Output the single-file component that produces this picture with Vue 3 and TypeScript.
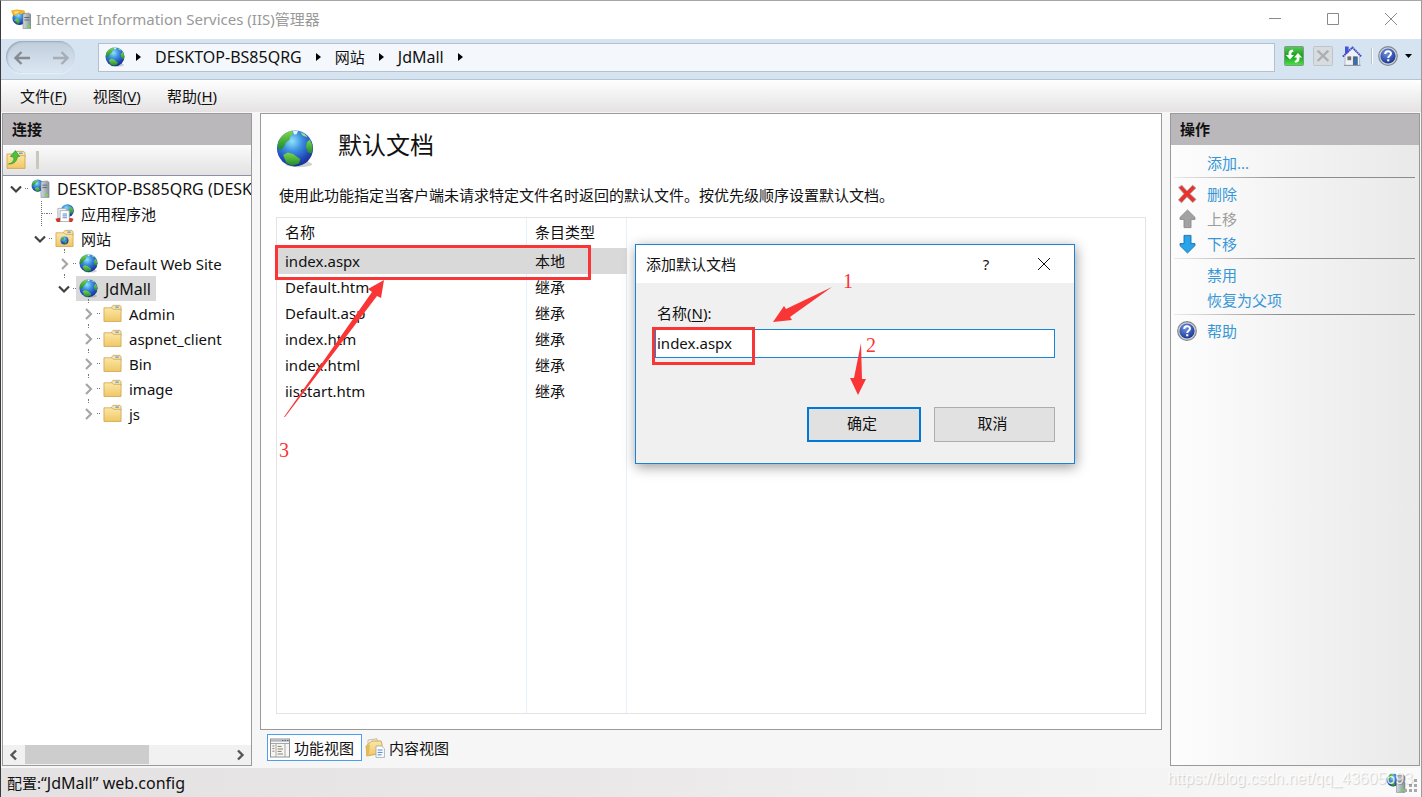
<script setup lang="ts">
import { ref } from 'vue'

interface TreeNode {
  label: string
  level: number
  icon: string
  state: 'open' | 'closed' | 'leaf'
  caps?: boolean
  stub?: boolean
  selected?: boolean
}

interface ActionItem {
  label: string
  icon?: string
  disabled?: boolean
}

const menus = [
  { text: '文件', key: 'F' },
  { text: '视图', key: 'V' },
  { text: '帮助', key: 'H' },
]

const crumbs = ['DESKTOP-BS85QRG', '网站', 'JdMall']

const nodes: TreeNode[] = [
  { label: 'DESKTOP-BS85QRG (DESK', level: 0, icon: 'server', state: 'open', caps: true },
  { label: '应用程序池', level: 1, icon: 'pool', state: 'leaf' },
  { label: '网站', level: 1, icon: 'sites', state: 'open' },
  { label: 'Default Web Site', level: 2, icon: 'globe', state: 'closed', stub: true },
  { label: 'JdMall', level: 2, icon: 'globe', state: 'open', caps: true, stub: true, selected: true },
  { label: 'Admin', level: 3, icon: 'folder', state: 'closed', stub: true },
  { label: 'aspnet_client', level: 3, icon: 'folder', state: 'closed', stub: true },
  { label: 'Bin', level: 3, icon: 'folder', state: 'closed', stub: true },
  { label: 'image', level: 3, icon: 'folder', state: 'closed', stub: true },
  { label: 'js', level: 3, icon: 'folder', state: 'closed', stub: true },
]

const documents = [
  { name: 'index.aspx', type: '本地' },
  { name: 'Default.htm', type: '继承' },
  { name: 'Default.asp', type: '继承' },
  { name: 'index.htm', type: '继承' },
  { name: 'index.html', type: '继承' },
  { name: 'iisstart.htm', type: '继承' },
]

const actionGroups: ActionItem[][] = [
  [{ label: '添加...' }],
  [
    { label: '删除', icon: 'delete' },
    { label: '上移', icon: 'up', disabled: true },
    { label: '下移', icon: 'down' },
  ],
  [{ label: '禁用' }, { label: '恢复为父项' }],
  [{ label: '帮助', icon: 'help' }],
]

const selectedDoc = ref(0)
const docName = ref('index.aspx')
</script>

<template>
  <div class="window">
    <svg class="sprite" aria-hidden="true">
      <defs>
        <radialGradient id="ocean" cx="0.42" cy="0.3" r="0.7">
          <stop offset="0" stop-color="#8fe4fb" />
          <stop offset="0.4" stop-color="#3c8fe0" />
          <stop offset="0.8" stop-color="#2148b8" />
          <stop offset="1" stop-color="#1a3390" />
        </radialGradient>
        <linearGradient id="land" x1="0" y1="0" x2="0" y2="1">
          <stop offset="0" stop-color="#7fd64a" />
          <stop offset="1" stop-color="#1d8a2e" />
        </linearGradient>
        <linearGradient id="paper" x1="0" y1="0" x2="0" y2="1">
          <stop offset="0" stop-color="#fbe7a6" />
          <stop offset="1" stop-color="#f0c765" />
        </linearGradient>
        <linearGradient id="steel" x1="0" y1="0" x2="1" y2="0">
          <stop offset="0" stop-color="#d5dadd" />
          <stop offset="1" stop-color="#84919a" />
        </linearGradient>
        <radialGradient id="helpfill" cx="0.4" cy="0.3" r="0.75">
          <stop offset="0" stop-color="#6f94e6" />
          <stop offset="1" stop-color="#16318f" />
        </radialGradient>
        <linearGradient id="green" x1="0" y1="0" x2="0" y2="1">
          <stop offset="0" stop-color="#5cc95c" />
          <stop offset="0.5" stop-color="#10a21a" />
          <stop offset="1" stop-color="#4fe24a" />
        </linearGradient>
      </defs>
      <symbol id="globe" viewBox="0 0 20 20">
        <ellipse cx="12" cy="18" rx="7" ry="1.6" fill="#000" opacity="0.18" />
        <circle cx="10" cy="9.7" r="9.5" fill="url(#ocean)" />
        <path d="M1.2 6C2.8 3 5.4 1 8.4 .4L9 2 7.6 3.2 7.2 5 5 6.8 4.4 8.6 2.8 10.2 .8 9.6z" fill="url(#land)" />
        <path d="M3.8 13.2L6.2 11.8 9 12.6 12.8 15.4 12 17.6 8.6 18.8 5.4 17.2z" fill="url(#land)" />
        <path d="M16.2 6.6L17.8 5C19.4 8 19.6 10 18.6 12.4L16.8 11.8 15.8 9z" fill="url(#land)" />
        <path d="M8.8 .5L11.6 .5 10.8 2.2 9.6 2.4z" fill="#e4f6ea" />
        <path d="M12.8 1.2L15 2 16.6 3.8 14.2 3z" fill="#9fe07a" />
      </symbol>
      <symbol id="server" viewBox="0 0 20 20">
        <circle cx="7" cy="7" r="6.4" fill="url(#ocean)" />
        <path d="M1.6 4.4L5 1 7.4 1.6 5.6 4 3.4 6.4 1 7.6z" fill="url(#land)" />
        <path d="M4 9.6L7.4 8.8 9.4 11 8 13.2 5 12.6z" fill="url(#land)" />
        <path d="M10.5 3L17 2 19 3.4V19.4H10.5z" fill="url(#steel)" stroke="#7b868d" stroke-width="0.6" />
        <path d="M12 6.5h5M12 9h5" stroke="#5c6870" stroke-width="1" />
        <rect x="15" y="16" width="3" height="2" fill="#6be03a" />
      </symbol>
      <symbol id="appicon" viewBox="0 0 20 20">
        <circle cx="8.4" cy="9" r="7" fill="url(#ocean)" />
        <path d="M3 11L6 9.6 9 12 7.4 15.4z" fill="url(#land)" />
        <path d="M0 1.5L5.5 .5 13 1.2 14.6 3.6 11 5 7 4.6 5 7 1.8 6z" fill="#f3b32d" />
        <path d="M3 2.4L8 2.2 7 4 4 5z" fill="#ffe28a" />
        <path d="M12 5L17.4 4 20 5.4V19.6H12z" fill="url(#steel)" stroke="#7b868d" stroke-width="0.6" />
        <path d="M13.4 8.5h5M13.4 11h5" stroke="#5c6870" />
        <rect x="16" y="16.2" width="3" height="2" fill="#6be03a" />
      </symbol>
      <symbol id="pool" viewBox="0 0 20 20">
        <circle cx="13" cy="7" r="6.8" fill="url(#ocean)" />
        <path d="M15 2.2L18.6 4.4 19.4 9 16.4 10.4 15 6z" fill="url(#land)" />
        <path d="M3 4.6H12V16H3z" fill="#eef0f1" stroke="#9ba2a6" stroke-width="0.8" />
        <path d="M5.4 7H15V18.4H5.4z" fill="#fff" stroke="#9ba2a6" stroke-width="0.8" />
        <path d="M8 10.5h4.6M8 12.5h4.6M8 14.5h4.6" stroke="#4a86c8" />
        <path d="M.4 15.4L5.4 14.4V19H2z" fill="#c9392c" />
        <path d="M19.6 15.4L15 14.4V19H18z" fill="#c9392c" />
      </symbol>
      <symbol id="folder" viewBox="0 0 20 20">
        <path d="M9 3.4L10.6 1.4H17.8L19 3V7H9z" fill="#f7e5b1" stroke="#c9a04c" stroke-width="0.8" />
        <rect x="13" y="2.6" width="3.6" height="1.4" fill="#5aa0dc" />
        <path d="M1 4H9.4L11 5.6H19V18.4H1z" fill="url(#paper)" stroke="#cda14a" stroke-width="0.8" />
      </symbol>
      <symbol id="sites" viewBox="0 0 20 20">
        <use href="#folder" width="20" height="20" />
        <circle cx="10" cy="12" r="4.2" fill="url(#ocean)" />
        <path d="M7 10.4L9.4 8.8 10 11 8 12.8zM10 13L12.6 12.6 12 15 10.4 15.4z" fill="#3fb53b" />
      </symbol>
      <symbol id="connect" viewBox="0 0 20 20">
        <use href="#folder" width="20" height="20" />
        <path d="M2.4 14C6 13.4 8 11 8 7.4L4.4 6.4 9.4 .6 13.6 6.4 11.2 7C11.2 11.4 7.4 14.4 2.4 14z" fill="#4cc13b" stroke="#2b8e26" stroke-width="0.6" />
      </symbol>
      <symbol id="refresh" viewBox="0 0 20 20">
        <rect x="0.5" y="0.5" width="19" height="19" rx="1" fill="url(#green)" stroke="#7f9a86" />
        <path d="M8.6 3.6C5.4 4 4.2 6 4.6 9H1.8L6 13.4 10 9H7.4C7 7 7.6 6 9.6 5.4z" fill="#fff" />
        <path d="M11.4 16.8C14.6 16.4 15.8 14.4 15.4 11.4H18.2L14 7 10 11.4H12.6C13 13.4 12.4 14.4 10.4 15z" fill="#fff" />
      </symbol>
      <symbol id="stop" viewBox="0 0 20 20">
        <rect x="0.5" y="0.5" width="19" height="19" rx="1" fill="#d9dcdf" stroke="#bfc4c9" />
        <path d="M4.6 4.6L15.4 15M15.4 4.6L4.6 15" stroke="#a9afb5" stroke-width="2.4" />
      </symbol>
      <symbol id="home" viewBox="0 0 20 20">
        <rect x="3" y="0.5" width="3.6" height="7" fill="#4553d4" />
        <path d="M3 9.4L10.4 2.4 17.6 9.4V19.4H3z" fill="#f0f1f4" stroke="#a3a9b4" stroke-width="0.7" />
        <path d="M.8 10.6L10.4 1.4 19.4 10.6" fill="none" stroke="#3a48cc" stroke-width="1.8" stroke-dasharray="1.6 0.6" />
        <rect x="5.4" y="10.4" width="3.8" height="3.8" fill="#6b6f76" />
        <rect x="11.2" y="10.8" width="4.2" height="8.4" fill="#2f6fc0" stroke="#69471e" stroke-width="0.5" />
        <path d="M2 19.4H18.6" stroke="#8f959c" />
      </symbol>
      <symbol id="help" viewBox="0 0 20 20">
        <circle cx="10" cy="10" r="9.3" fill="#d0d3d7" stroke="#83888e" stroke-width="1.2" />
        <circle cx="10" cy="10" r="7.6" fill="url(#helpfill)" />
        <path d="M7.2 8C7.2 4.4 13 4.4 13 7.6C13 9.8 10.2 9.6 10.2 12" fill="none" stroke="#fff" stroke-width="2" />
        <rect x="9.2" y="13.2" width="2.1" height="2.1" fill="#fff" />
      </symbol>
      <symbol id="delete" viewBox="0 0 20 20">
        <path d="M1.6 3.6L4.8 1.2 10 7 15.6 1.2 18.8 4 13 9.8 19 15.4 15.8 18.6 10 12.8 4.6 18.8 1.4 16 7 9.8z" fill="#e8322b" stroke="#a9a3a3" stroke-width="0.9" />
      </symbol>
      <symbol id="up" viewBox="0 0 20 20">
        <path d="M10.5 1L18 8.4V10.4H14V18.6H7V10.4H3V8.4z" fill="#a2a2a2" stroke="#8a8a8a" stroke-width="0.9" />
      </symbol>
      <symbol id="down" viewBox="0 0 20 20">
        <path d="M10.5 19L18 11.6V9.6H14V1.4H7V9.6H3V11.6z" fill="#27a4ea" stroke="#1b6fa8" stroke-width="0.9" />
      </symbol>
      <symbol id="features" viewBox="0 0 20 20">
        <rect x="0.5" y="1" width="19" height="18" fill="#f6f6f5" stroke="#8f9294" />
        <path d="M1 2.5H19" stroke="#b3b7bb" stroke-width="2.4" />
        <path d="M12 2.5h1.4M14.6 2.5H16M17 2.5h1.4" stroke="#55728f" />
        <path d="M1 5.5H19M6 5.5V19M15 5.5V19" stroke="#a5a8aa" />
        <path d="M2.4 8h2M2.4 10.6h2M2.4 13.2h2M7.6 8.4h4M7.6 11h5.4M7.6 13.4h4M7.6 16h5.4" stroke="#8b8166" />
      </symbol>
      <symbol id="content" viewBox="0 0 20 20">
        <path d="M3 2L12 .8 13 14 3 16z" fill="#f4f2ea" stroke="#b8b09a" stroke-width="0.8" />
        <path d="M1 8L7 3H16L17 6V15L2 18z" fill="url(#paper)" stroke="#c79b43" stroke-width="0.8" />
        <path d="M1 8L5 6.4 3.6 18H1z" fill="#e2b95c" />
        <path d="M11 8H16.6L19.4 10.6V19.4H11z" fill="#fff" stroke="#9aa3ab" stroke-width="0.8" />
        <path d="M12.6 12h5M12.6 14.4h5M12.6 16.8h4" stroke="#4a86c8" />
      </symbol>
    </svg>

    <header class="titlebar">
      <svg class="icon20"><use href="#appicon" /></svg>
      <h1>Internet Information Services (IIS)管理器</h1>
      <div class="caption">
        <button type="button" aria-label="最小化">
          <svg viewBox="0 0 12 12"><path d="M0 5.5H12" /></svg>
        </button>
        <button type="button" aria-label="最大化">
          <svg viewBox="0 0 12 12"><path d="M.5 .5H11.5V11.5H.5z" /></svg>
        </button>
        <button type="button" aria-label="关闭">
          <svg viewBox="0 0 12 12"><path d="M0 0L12 12M12 0L0 12" /></svg>
        </button>
      </div>
    </header>

    <nav class="navbar">
      <div class="history">
        <button type="button" aria-label="后退">
          <svg viewBox="0 0 16 14"><path d="M16 7H2M7.5 1L1.5 7 7.5 13" /></svg>
        </button>
        <button type="button" aria-label="前进" class="dim">
          <svg viewBox="0 0 16 14"><path d="M0 7H14M8.5 1L14.5 7 8.5 13" /></svg>
        </button>
      </div>
      <div class="address">
        <svg class="icon20"><use href="#globe" /></svg>
        <svg class="tri first" viewBox="0 0 5 8"><path d="M0 0L5 4 0 8z" /></svg>
        <template v-for="c in crumbs" :key="c">
          <a href="#" class="crumb" :class="{ latin: c !== '网站' }">{{ c }}</a>
          <svg class="tri" viewBox="0 0 5 8"><path d="M0 0L5 4 0 8z" /></svg>
        </template>
      </div>
      <div class="tools">
        <button type="button" aria-label="刷新"><svg class="icon20"><use href="#refresh" /></svg></button>
        <button type="button" aria-label="停止"><svg class="icon20"><use href="#stop" /></svg></button>
        <button type="button" aria-label="主页"><svg class="icon20"><use href="#home" /></svg></button>
        <span class="divider"></span>
        <button type="button" aria-label="帮助" class="helpbtn">
          <svg class="icon20"><use href="#help" /></svg>
          <svg class="caret" viewBox="0 0 7 4"><path d="M0 0H7L3.5 4z" /></svg>
        </button>
      </div>
    </nav>

    <div class="menubar">
      <button v-for="m in menus" :key="m.key" type="button">{{ m.text }}(<u>{{ m.key }}</u>)</button>
    </div>

    <div class="body">
      <aside class="panel tree-panel">
        <h2>连接</h2>
        <div class="treebar">
          <button type="button" aria-label="连接到服务器"><svg class="icon20"><use href="#connect" /></svg></button>
          <span class="grip"></span>
        </div>
        <ul class="tree">
          <li v-for="n in nodes" :key="n.label" :class="['level' + n.level, n.state, { stub: n.stub }]">
            <button v-if="n.state !== 'leaf'" type="button" class="twist" :aria-label="'展开 ' + n.label">
              <svg v-if="n.state === 'open'" viewBox="0 0 12 12"><path d="M1 3.5L6 8.5 11 3.5" stroke="#404040" /></svg>
              <svg v-else viewBox="0 0 12 12"><path d="M4 1L9 6 4 11" stroke="#a6a6a6" /></svg>
            </button>
            <span v-else class="twist branch"></span>
            <span class="dots"></span>
            <a href="#" :class="{ selected: n.selected, latin: n.caps }">
              <svg class="icon19"><use :href="'#' + n.icon" /></svg>
              <span>{{ n.label }}</span>
            </a>
          </li>
        </ul>
        <div class="scrollbar">
          <button type="button" aria-label="向左滚动"><svg viewBox="0 0 12 12"><path d="M8 1.5L3.5 6 8 10.5" /></svg></button>
          <div class="track"><div class="thumb"></div></div>
          <button type="button" aria-label="向右滚动"><svg viewBox="0 0 12 12"><path d="M4 1.5L8.5 6 4 10.5" /></svg></button>
        </div>
      </aside>

      <div class="center">
        <main class="main">
          <div class="heading">
            <svg class="icon40"><use href="#globe" /></svg>
            <h2>默认文档</h2>
          </div>
          <p>使用此功能指定当客户端未请求特定文件名时返回的默认文件。按优先级顺序设置默认文档。</p>
          <div class="list">
            <table>
              <thead>
                <tr>
                  <th class="name">名称</th>
                  <th>条目类型</th>
                </tr>
              </thead>
              <tbody>
                <tr v-for="(d, i) in documents" :key="d.name" :class="{ selected: i === selectedDoc }" @click="selectedDoc = i">
                  <td>{{ d.name }}</td>
                  <td>{{ d.type }}</td>
                </tr>
              </tbody>
            </table>
          </div>

          <div class="mark mark-row"></div>
          <svg class="arrows" viewBox="0 0 140 200">
            <path d="M23 303L111 178 107 175 123 166 120 184 116 182 24 303z" />
          </svg>
          <span class="num num3">3</span>

          <section class="dialog" role="dialog" aria-labelledby="dlg-title">
            <header>
              <h3 id="dlg-title">添加默认文档</h3>
              <button type="button" aria-label="帮助" class="q">?</button>
              <button type="button" aria-label="关闭"><svg viewBox="0 0 12 12"><path d="M0 0L12 12M12 0L0 12" /></svg></button>
            </header>
            <form @submit.prevent>
              <label for="doc-name">名称(<u>N</u>):</label>
              <input id="doc-name" v-model="docName" type="text" />
              <div class="buttons">
                <button type="submit" class="primary">确定</button>
                <button type="button">取消</button>
              </div>
            </form>
            <div class="mark mark-input"></div>
            <svg class="arrows" viewBox="0 0 140 200">
              <path d="M196 42L150 64 148 61 137 77 156 75 154 72z" />
              <path d="M225 98L218 133 214 133 222 150 230 134 226 134z" />
            </svg>
            <span class="num num1">1</span>
            <span class="num num2">2</span>
          </section>
        </main>
        <div class="tabs">
          <button type="button" class="active"><svg class="icon20"><use href="#features" /></svg>功能视图</button>
          <button type="button"><svg class="icon20"><use href="#content" /></svg>内容视图</button>
        </div>
      </div>

      <aside class="panel actions">
        <h2>操作</h2>
        <div class="groups">
          <ul v-for="(g, gi) in actionGroups" :key="gi">
            <li v-for="a in g" :key="a.label">
              <span class="slot"><svg v-if="a.icon" class="icon20"><use :href="'#' + a.icon" /></svg></span>
              <a href="#" :class="{ disabled: a.disabled }">{{ a.label }}</a>
            </li>
          </ul>
        </div>
      </aside>
    </div>

    <footer class="status">
      <span>配置:<span class="latin">“JdMall” web.config</span></span>
      <svg class="icon20 end"><use href="#server" /></svg>
      <svg class="gripdots" viewBox="0 0 14 14">
        <path d="M10 0h3v3h-3zM5 5h3v3h-3zM10 5h3v3h-3zM0 10h3v3h-3zM5 10h3v3h-3zM10 10h3v3h-3z" />
      </svg>
      <span class="watermark">https://blog.csdn.net/qq_43605693</span>
    </footer>
  </div>
</template>

<style>
body {
  margin: 0;
}
</style>

<style scoped>
.window,
.window * {
  box-sizing: border-box;
}
.window {
  display: flex;
  flex-direction: column;
  min-height: 100vh;
  border-top: 1px solid #a5a5a5;
  border-left: 1px solid #3a3a40;
  border-right: 1px solid #9b9b9b;
  background: #f6f6f6;
  color: #111;
  font-family: "Noto Sans", "Noto Sans CJK SC", sans-serif;
  font-size: 15px;
  line-height: 24px;
}
.sprite {
  position: absolute;
  width: 0;
  height: 0;
}
button {
  margin: 0;
  padding: 0;
  border: 0;
  background: none;
  color: inherit;
  font: inherit;
}
a {
  color: inherit;
  text-decoration: none;
}
h1,
h2,
h3,
p,
ul {
  margin: 0;
  padding: 0;
  font-size: 15px;
  list-style: none;
}
svg {
  display: block;
  flex: none;
}
.icon19 {
  width: 19px;
  height: 19px;
}
.icon20 {
  width: 20px;
  height: 20px;
}
.icon40 {
  width: 38px;
  height: 40px;
}
.latin {
  font-size: 16px;
}

.titlebar {
  display: flex;
  align-items: center;
  gap: 5px;
  height: 38px;
  padding: 0 1px 2px 10px;
  background: #fff;
}
.titlebar h1 {
  flex: 1;
  color: #999;
  font-weight: 400;
}
.caption {
  display: flex;
}
.caption button {
  display: flex;
  justify-content: center;
  width: 58px;
}
.caption svg,
.dialog header svg {
  width: 12px;
  height: 12px;
  fill: none;
  stroke: #8a8a8a;
  overflow: visible;
}

.navbar {
  display: flex;
  align-items: center;
  height: 41px;
  padding: 0 9px 4px 5px;
  border-bottom: 1px solid #b6c3d0;
  background: #d6e4f2;
}
.history {
  display: flex;
  align-items: center;
  justify-content: space-between;
  width: 69px;
  height: 32px;
  padding: 2px 6px 0 8px;
  border-radius: 16px;
  background: linear-gradient(#c0cddb, #dbe7f3);
  box-shadow: inset 1px 1px 2px #98a6b4, 0 1px 1px #e9f1f9;
}
.history svg {
  width: 16px;
  height: 14px;
  fill: none;
  stroke: #858b91;
  stroke-width: 2.4;
}
.history .dim svg {
  stroke: #a6adb4;
}
.address {
  display: flex;
  flex: 1;
  align-items: center;
  height: 29px;
  margin-left: 23px;
  padding-left: 6px;
  border: 1px solid #b4c0cc;
  background: #f4f8fc;
}
.tri {
  width: 5px;
  height: 8px;
}
.tri.first {
  margin-left: 11px;
}
.crumb {
  padding: 0 14px;
}
.tools {
  display: flex;
  align-items: center;
  gap: 9px;
  height: 20px;
  margin: 0 0 2px 9px;
}
.divider {
  width: 2px;
  height: 16px;
  border-left: 1px solid #b7bfc8;
  border-right: 1px solid #fff;
}
.helpbtn {
  display: flex;
  align-items: center;
  gap: 7px;
  margin-left: -4px;
}
.caret {
  width: 7px;
  height: 4px;
}

.menubar {
  display: flex;
  align-items: center;
  gap: 26px;
  height: 32px;
  padding-left: 19px;
  background: linear-gradient(#fff, #e4e2e3);
}
u {
  text-underline-offset: 2px;
}

.body {
  display: grid;
  flex: 1;
  grid-template-columns: 250px minmax(0, 1fr) 250px;
  gap: 8px;
  padding: 1px 1px 2px 1px;
}
.panel {
  display: flex;
  flex-direction: column;
  min-width: 0;
  border: 1px solid #9a9a9a;
}
.panel h2 {
  height: 31px;
  padding-left: 9px;
  background: #bab8ba;
  line-height: 31px;
}
.treebar {
  display: flex;
  align-items: center;
  gap: 10px;
  height: 31px;
  padding-left: 3px;
  border-bottom: 1px solid #8e8ea6;
  background: linear-gradient(#fbfbfb, #e3e2e3);
}
.grip {
  width: 3px;
  height: 18px;
  background: #c9c8bb;
}
.tree {
  flex: 1;
  overflow: hidden;
  background: #fff;
}
.tree li {
  display: flex;
  align-items: center;
  height: 25px;
  white-space: nowrap;
}
.level0 {
  padding-left: 6px;
}
.level1 {
  padding-left: 30px;
}
.level2 {
  padding-left: 54px;
}
.level3 {
  padding-left: 78px;
}
.twist {
  position: relative;
  flex: none;
  width: 14px;
  height: 25px;
}
.twist svg {
  width: 12px;
  height: 12px;
  margin: 0 auto;
  fill: none;
  stroke-width: 2.2;
}
.stub .twist::before {
  position: absolute;
  top: -2px;
  left: 7px;
  height: 4px;
  border-left: 1px dotted #777;
  content: "";
}
.branch::before {
  position: absolute;
  top: 0;
  left: 8px;
  height: 25px;
  border-left: 1px dotted #777;
  content: "";
}
.branch::after {
  position: absolute;
  top: 12px;
  left: 8px;
  width: 6px;
  border-top: 1px dotted #777;
  content: "";
}
.dots {
  flex: none;
  width: 5px;
  border-top: 1px dotted #777;
}
.open .dots,
.closed .dots {
  width: 3px;
  margin-left: 2px;
}
.tree a {
  display: flex;
  align-items: center;
  gap: 7px;
  height: 25px;
  padding: 0 5px 0 3px;
}
.tree a.selected {
  background: #d9d9d9;
}
.scrollbar {
  display: flex;
  height: 20px;
  background: #f1f1f1;
}
.scrollbar button {
  display: flex;
  align-items: center;
  justify-content: center;
  width: 22px;
}
.scrollbar svg {
  width: 12px;
  height: 12px;
  fill: none;
  stroke: #555;
  stroke-width: 2.4;
}
.track {
  flex: 1;
}
.thumb {
  width: 61%;
  height: 19px;
  background: #cdcdcd;
}

.center {
  display: flex;
  flex-direction: column;
  min-width: 0;
}
.main {
  position: relative;
  display: flex;
  flex: 1;
  flex-direction: column;
  padding: 14px 15px 15px;
  border: 1px solid #9a9a9a;
  background: #fff;
}
.heading {
  display: flex;
  align-items: center;
  gap: 24px;
  height: 42px;
}
.heading h2 {
  padding-bottom: 8px;
  font-size: 24px;
  font-weight: 400;
  line-height: 36px;
}
.main p {
  padding: 13px 0 10px 3px;
}
.list {
  flex: 1;
  border: 1px solid #e3e3e3;
  background:
    linear-gradient(#e6f0fa, #e6f0fa) 249px 0 / 1px 100% no-repeat,
    linear-gradient(#e6f0fa, #e6f0fa) 349px 0 / 1px 100% no-repeat;
}
table {
  width: 350px;
  border-collapse: collapse;
  table-layout: fixed;
}
.name {
  width: 250px;
}
th,
td {
  height: 26px;
  padding: 0 8px;
  font-weight: 400;
  line-height: 24px;
  text-align: left;
}
th {
  height: 30px;
  padding-bottom: 3px;
}
tr.selected {
  background: #d9d9d9;
}
.tabs {
  display: flex;
  align-items: center;
  height: 36px;
  padding: 0 0 1px 7px;
}
.tabs button {
  display: flex;
  align-items: center;
  gap: 4px;
  height: 27px;
  padding: 0 7px 0 2px;
  border: 1px solid transparent;
}
.tabs .active {
  border-color: #4a9ff0;
  background: #fff;
}

.actions {
  background: linear-gradient(90deg, #fdfdfd, #e9e9e9);
}
.groups {
  padding: 5px 4px 0 3px;
}
.groups ul + ul {
  margin-top: 2px;
  padding-top: 3px;
  border-top: 1px solid;
  border-image: linear-gradient(90deg, #ececec, #8c8c8c 45%) 1;
}
.groups li {
  display: flex;
  align-items: center;
  gap: 10px;
  height: 25px;
}
.slot {
  width: 20px;
  margin-left: 3px;
}
.groups a {
  color: #3797d6;
}
.groups a.disabled {
  color: #9d9d9d;
}

.status {
  position: relative;
  display: flex;
  align-items: center;
  height: 29px;
  padding: 0 3px 0 6px;
  background: linear-gradient(90deg, #e3e1e2, #e9e7e8 40%, #fafafa);
}
.end {
  margin-left: auto;
}
.gripdots {
  width: 14px;
  height: 14px;
  margin: 6px 0 0 -2px;
  fill: #a8a8a8;
}
.watermark {
  position: absolute;
  top: 0;
  right: 8px;
  color: rgba(255, 255, 255, 0.8);
  font-family: "Liberation Sans", sans-serif;
  font-size: 16px;
  line-height: 22px;
  text-shadow: 1px 1px 1px rgba(0, 0, 0, 0.16);
}

.dialog {
  position: absolute;
  top: 130px;
  left: 374px;
  width: 440px;
  border: 1px solid #1883d7;
  background: #f0f0f0;
  box-shadow: 1px 3px 12px rgba(0, 0, 0, 0.4);
}
.dialog header {
  display: flex;
  align-items: center;
  height: 38px;
  padding: 0 1px 1px 10px;
  background: #fff;
}
.dialog h3 {
  flex: 1;
  font-weight: 400;
}
.dialog header button {
  display: flex;
  justify-content: center;
  width: 58px;
}
.dialog header svg {
  stroke: #111;
}
.dialog form {
  display: flex;
  flex-direction: column;
  padding: 18px 19px 21px;
}
.dialog label {
  padding-left: 2px;
}
.dialog input {
  height: 29px;
  margin-top: 4px;
  padding: 0 1px 2px;
  border: 1px solid #1883d7;
  border-radius: 0;
  outline: 0;
  background: #fff;
  color: #111;
  font: inherit;
}
.buttons {
  display: flex;
  justify-content: flex-end;
  gap: 13px;
  margin-top: 49px;
}
.buttons button {
  width: 121px;
  height: 35px;
  padding: 0 4px 3px 0;
  border: 1px solid #adadad;
  background: #e1e1e1;
}
.buttons .primary {
  width: 114px;
  border: 2px solid #0078d7;
}

.mark {
  position: absolute;
  border: 3px solid #fa3535;
  pointer-events: none;
}
.mark-row {
  top: 131px;
  left: 14px;
  width: 316px;
  height: 35px;
}
.mark-input {
  top: 82px;
  left: 16px;
  width: 103px;
  height: 38px;
}
.arrows {
  position: absolute;
  top: 0;
  left: 0;
  width: 140px;
  height: 200px;
  overflow: visible;
  fill: #fa3535;
  pointer-events: none;
}
.num {
  position: absolute;
  color: #fa3535;
  font-family: "Liberation Serif", serif;
  font-size: 20px;
  line-height: 24px;
}
.num1 {
  top: 24px;
  left: 207px;
}
.num2 {
  top: 88px;
  left: 230px;
}
.num3 {
  top: 324px;
  left: 18px;
}
</style>
